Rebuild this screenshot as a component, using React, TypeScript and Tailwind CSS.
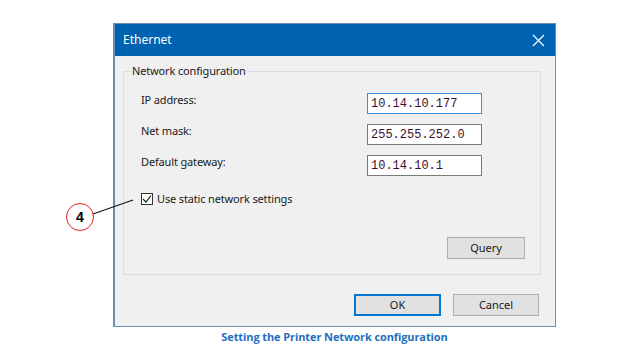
import React from "react";

const ui = { fontFamily: '"Noto Sans", "Open Sans", sans-serif' };
const mono = { fontFamily: '"Liberation Mono", "Courier New", monospace' };

function Field({ label, value, focused }: { label: string; value: string; focused?: boolean }) {
  return (
    <div className="flex items-start h-[21px]">
      <div className="w-[243px] pl-[17px] -mt-[1px] text-[11px] tracking-[-0.15px] leading-[16px] text-[#1a1a1a]">{label}</div>
      <div
        className={
          "w-[115px] h-[21px] bg-white flex items-center pl-[3px] text-[12px] text-[#3a1030] " +
          (focused ? "border border-[#3f8fd8]" : "border border-[#7a7a7a]")
        }
        style={mono}
      >
        {value}
      </div>
    </div>
  );
}

export default function App() {
  return (
    <div className="relative w-[637px] h-[358px] bg-white overflow-hidden" style={ui}>
      <div className="ml-[113px] mt-[23px] w-[443px] h-[304px] border border-[#6d8db4] border-l-2 flex flex-col">
        <div className="h-[32px] bg-[#0063b1] flex items-center justify-between pl-[8px] pr-[10px] text-white">
          <span className="text-[12px] leading-none">Ethernet</span>
          <svg width="13" height="13" viewBox="0 0 13 13">
            <path d="M1 1 L12 12 M12 1 L1 12" stroke="white" strokeWidth="1.2" />
          </svg>
        </div>
        <div className="flex-1 bg-[#f0f0f0] flex flex-col pl-[8px]">
          <div className="relative mt-[15px] w-[418px] h-[204px] border border-[#dcdcdc] flex flex-col">
            <span className="absolute -top-[9px] left-[7px] px-[1px] bg-[#f0f0f0] text-[11px] tracking-[-0.15px] leading-[16px] text-[#1a1a1a]">
              Network configuration
            </span>
            <div className="mt-[21px] flex flex-col gap-[10px]">
              <Field label="IP address:" value="10.14.10.177" focused />
              <Field label="Net mask:" value="255.255.252.0" />
              <Field label="Default gateway:" value="10.14.10.1" />
            </div>
            <div className="mt-[15px] ml-[17px] flex items-center gap-[4px]">
              <div className="w-[12px] h-[12px] border border-[#333] bg-white flex items-center justify-center">
                <svg width="10" height="10" viewBox="0 0 10 10">
                  <path d="M1 5 L4 8 L9 1.5" stroke="#222" strokeWidth="1.2" fill="none" />
                </svg>
              </div>
              <span className="text-[11px] tracking-[-0.15px] leading-[16px] text-[#1a1a1a]">Use static network settings</span>
            </div>
            <div className="flex justify-end mt-[30px] pr-[15px]">
              <div className="w-[78px] h-[22px] bg-[#e1e1e1] border border-[#adadad] flex items-center justify-center text-[11px] text-[#1a1a1a]">
                Query
              </div>
            </div>
          </div>
          <div className="flex mt-[19px] ml-[231px] gap-[12px]">
            <div className="w-[87px] h-[22px] bg-[#e1e1e1] border-2 border-[#0078d7] flex items-center justify-center text-[11px] text-[#1a1a1a]">
              OK
            </div>
            <div className="w-[86px] h-[22px] bg-[#e1e1e1] border border-[#adadad] flex items-center justify-center text-[11px] text-[#1a1a1a]">
              Cancel
            </div>
          </div>
        </div>
      </div>
      <div className="ml-[113px] w-[443px] mt-[2px] text-center text-[11px] tracking-[-0.1px] font-bold text-[#1f6fbf]" style={{ fontFamily: '"Open Sans", "Noto Sans", sans-serif' }}>
        Setting the Printer Network configuration
      </div>

      <svg className="absolute left-0 top-0" width="637" height="358" style={{ pointerEvents: "none" }}>
        <line x1="93" y1="214" x2="133" y2="200" stroke="#111" strokeWidth="1.2" />
      </svg>
      <div className="absolute left-[66px] top-[203px] w-[28px] h-[28px] rounded-full border-[1.5px] border-[#e02020] bg-white flex items-center justify-center text-[14px] font-bold text-black" style={{ fontFamily: '"Liberation Sans", Arial, sans-serif' }}>
        4
      </div>
    </div>
  );
}
